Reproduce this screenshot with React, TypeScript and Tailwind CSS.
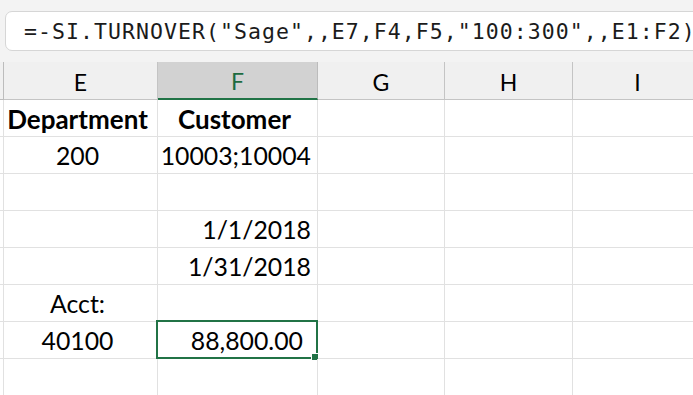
const COLS = [
  { key: 'E', w: 'w-[154px]' },
  { key: 'F', w: 'w-[160px]' },
  { key: 'G', w: 'w-[127px]' },
  { key: 'H', w: 'w-[128px]' },
  { key: 'I', w: 'w-[130px]' },
]

type Cell = { text?: string; align?: 'center' | 'right'; bold?: boolean; pad?: string }

const ROWS: Cell[][] = [
  [
    { text: 'Department', align: 'center', bold: true },
    { text: 'Customer', align: 'center', bold: true },
  ],
  [{ text: '200', align: 'center' }, { text: '10003;10004', align: 'right' }],
  [{}, {}],
  [{}, { text: '1/1/2018', align: 'right' }],
  [{}, { text: '1/31/2018', align: 'right' }],
  [{ text: 'Acct:', align: 'center' }, {}],
  [{ text: '40100', align: 'center' }, { text: '88,800.00', align: 'right', pad: 'pr-[14px]' }],
  [{}, {}],
]

export default function App() {
  return (
    <div className="h-[395px] w-[693px] overflow-hidden bg-white font-['Lato',sans-serif] text-black">
      {/* formula bar */}
      <div className="h-[62px] bg-[#f3f3f3] pl-[5px] pt-[11px]">
        <div className="flex h-[40px] w-[720px] items-center rounded-l-[7px] border border-[#d6d6d6] bg-white pl-[18px] pt-[3px]">
          <span className="whitespace-nowrap font-['DejaVu_Sans_Mono',monospace] text-[21.5px] tracking-[1.05px] text-[#1b1b1b]">
            =-SI.TURNOVER("Sage",,E7,F4,F5,"100:300",,E1:F2)
          </span>
        </div>
      </div>

      {/* column headers */}
      <div className="flex h-[38px]">
        <div className="w-[4px] shrink-0 border-r border-b border-[#bcbcbc] bg-[#f0f0f0]" />
        {COLS.map((c) => (
          <div
            key={c.key}
            className={`${c.w} flex shrink-0 items-end justify-center border-r pb-[5px] text-[23px] leading-none ${
              c.key === 'F'
                ? 'border-b-2 border-r-[#bcbcbc] border-b-[#217346] bg-[#d2d2d2] text-[#1d6b40]'
                : 'border-b border-[#c4c4c4] bg-[#f0f0f0]'
            }`}
          >
            {c.key}
          </div>
        ))}
      </div>

      {/* grid */}
      {ROWS.map((row, r) => (
        <div key={r} className="flex h-[37px]">
          <div className="w-[4px] shrink-0 border-r border-b border-[#e1e1e1]" />
          {COLS.map((c, i) => {
            const cell = row[i] ?? {}
            const selected = r === 6 && c.key === 'F'
            return (
              <div
                key={c.key}
                className={`${c.w} relative flex shrink-0 items-end border-r border-b border-[#e1e1e1] pb-[4px] leading-none ${
                  cell.align === 'center' ? 'justify-center' : 'justify-end'
                } ${cell.pad ?? 'pr-[6px]'} ${cell.bold ? 'text-[26px] font-bold' : 'text-[24.8px]'}`}
              >
                {cell.text}
                {selected && (
                  <>
                    <div className="absolute -left-[2px] -top-[2px] h-[39px] w-[162px] border-2 border-[#217346]" />
                    <div className="absolute -bottom-[3px] -right-[2px] h-[8px] w-[8px] border border-white bg-[#217346]" />
                  </>
                )}
              </div>
            )
          })}
        </div>
      ))}
    </div>
  )
}
